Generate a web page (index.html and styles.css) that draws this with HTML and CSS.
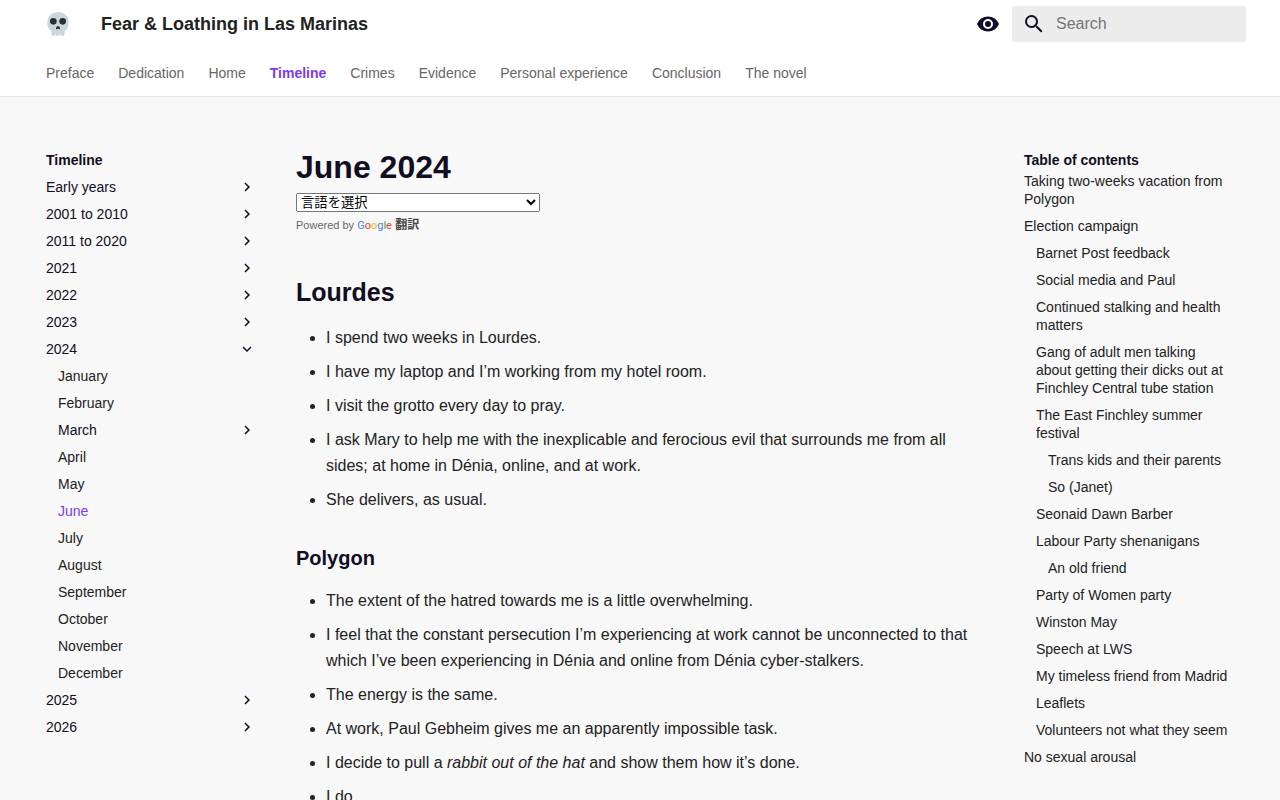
FILE: index.html
```html
<!DOCTYPE html>
<html lang="en">
<head>
  <meta charset="UTF-8" />
  <meta name="viewport" content="width=device-width, initial-scale=1" />
  <title>June 2024 - Fear &amp; Loathing in Las Marinas</title>
  <link rel="stylesheet" href="styles.css">
</head>
<body>

<!-- shared icons -->
<svg class="sprite" aria-hidden="true">
  <symbol id="chevron" viewBox="0 0 24 24"><path d="M8.59 16.58 13.17 12 8.59 7.41 10 6l6 6-6 6z"/></symbol>
</svg>

<header class="header">
  <div class="header-bar">
    <a href="#" class="logo" aria-label="Home">
      <svg viewBox="0 0 36 36">
        <path fill="#CCD6DD" d="M34 16C34 6 26.837 0 18 0S2 6 2 16c0 5.574 2.002 10.388 6 12.64V33a3 3 0 0 0 6 0v1a2.5 2.5 0 0 0 4 1 2.5 2.5 0 0 0 4-1v-1a3 3 0 0 0 6 0v-4.360C31.998 26.388 34 21.574 34 16z"/>
        <circle fill="#292F33" cx="11" cy="14" r="5"/>
        <circle fill="#292F33" cx="25" cy="14" r="5"/>
        <path fill="#292F33" d="M15 25c0-2 1.500-4 3-4s3 2 3 4-2 0-3 0-3 2-3 0z"/>
        <path fill="#fff" fill-opacity=".4" d="M13.500 32h1v4h-1zM17.500 32h1v4h-1zM21.500 32h1v4h-1z"/>
      </svg>
    </a>
    <span class="site-title">Fear &amp; Loathing in Las Marinas</span>
    <button type="button" class="icon-button" aria-label="Switch colour mode">
      <svg viewBox="0 0 24 24"><path d="M12 9a3 3 0 0 0-3 3 3 3 0 0 0 3 3 3 3 0 0 0 3-3 3 3 0 0 0-3-3m0 8a5 5 0 0 1-5-5 5 5 0 0 1 5-5 5 5 0 0 1 5 5 5 5 0 0 1-5 5m0-12.500C7 4.500 2.730 7.610 1 12c1.730 4.390 6 7.500 11 7.500s9.270-3.110 11-7.500c-1.730-4.390-6-7.500-11-7.500"/></svg>
    </button>
    <form class="search" role="search">
      <svg viewBox="0 0 24 24"><path d="M9.500 3A6.500 6.500 0 0 1 16 9.500c0 1.610-.59 3.090-1.560 4.230l.27.27h.79l5 5-1.500 1.500-5-5v-.79l-.27-.27A6.516 6.516 0 0 1 9.500 16 6.500 6.500 0 0 1 3 9.500 6.500 6.500 0 0 1 9.500 3m0 2C7 5 5 7 5 9.500S7 14 9.500 14 14 12 14 9.500 12 5 9.500 5"/></svg>
      <input type="text" placeholder="Search" aria-label="Search">
    </form>
  </div>
  <nav class="tabs" aria-label="Tabs">
    <a href="#">Preface</a>
    <a href="#">Dedication</a>
    <a href="#">Home</a>
    <a href="#" class="active">Timeline</a>
    <a href="#">Crimes</a>
    <a href="#">Evidence</a>
    <a href="#">Personal experience</a>
    <a href="#">Conclusion</a>
    <a href="#">The novel</a>
  </nav>
</header>

<div class="layout">
  <nav class="sidebar" aria-label="Timeline">
    <div class="nav-title">Timeline</div>
    <ul>
      <li><a href="#" class="section">Early years <svg><use href="#chevron"/></svg></a></li>
      <li><a href="#" class="section">2001 to 2010 <svg><use href="#chevron"/></svg></a></li>
      <li><a href="#" class="section">2011 to 2020 <svg><use href="#chevron"/></svg></a></li>
      <li><a href="#" class="section">2021 <svg><use href="#chevron"/></svg></a></li>
      <li><a href="#" class="section">2022 <svg><use href="#chevron"/></svg></a></li>
      <li><a href="#" class="section">2023 <svg><use href="#chevron"/></svg></a></li>
      <li>
        <a href="#" class="section open">2024 <svg><use href="#chevron"/></svg></a>
        <ul>
          <li><a href="#">January</a></li>
          <li><a href="#">February</a></li>
          <li><a href="#" class="section">March <svg><use href="#chevron"/></svg></a></li>
          <li><a href="#">April</a></li>
          <li><a href="#">May</a></li>
          <li><a href="#" class="active">June</a></li>
          <li><a href="#">July</a></li>
          <li><a href="#">August</a></li>
          <li><a href="#">September</a></li>
          <li><a href="#">October</a></li>
          <li><a href="#">November</a></li>
          <li><a href="#">December</a></li>
        </ul>
      </li>
      <li><a href="#" class="section">2025 <svg><use href="#chevron"/></svg></a></li>
      <li><a href="#" class="section">2026 <svg><use href="#chevron"/></svg></a></li>
    </ul>
  </nav>

  <main class="content">
    <h1>June 2024</h1>
    <div class="translate">
      <select aria-label="言語翻訳ウィジェット" lang="ja">
        <option>言語を選択</option>
      </select>
      <div class="powered">
        Powered by
        <a href="#"><span class="google"><span class="blue">G</span><span class="red">o</span><span class="yellow">o</span><span class="blue">g</span><span class="green">l</span><span class="red">e</span></span> <span lang="ja">翻訳</span></a>
      </div>
    </div>

    <h2 id="lourdes">Lourdes</h2>
    <ul>
      <li>I spend two weeks in Lourdes.</li>
      <li>I have my laptop and I’m working from my hotel room.</li>
      <li>I visit the grotto every day to pray.</li>
      <li>I ask Mary to help me with the inexplicable and ferocious evil that surrounds me from all sides; at home in Dénia, online, and at work.</li>
      <li>She delivers, as usual.</li>
    </ul>

    <h3 id="polygon">Polygon</h3>
    <ul>
      <li>The extent of the hatred towards me is a little overwhelming.</li>
      <li>I feel that the constant persecution I’m experiencing at work cannot be unconnected to that which I’ve been experiencing in Dénia and online from Dénia cyber-stalkers.</li>
      <li>The energy is the same.</li>
      <li>At work, Paul Gebheim gives me an apparently impossible task.</li>
      <li>I decide to pull a <em>rabbit out of the hat</em> and show them how it’s done.</li>
      <li>I do.</li>
    </ul>
  </main>

  <nav class="sidebar toc" aria-label="Table of contents">
    <div class="nav-title">Table of contents</div>
    <ul>
      <li><a href="#">Taking two-weeks vacation from Polygon</a></li>
      <li>
        <a href="#">Election campaign</a>
        <ul>
          <li><a href="#">Barnet Post feedback</a></li>
          <li><a href="#">Social media and Paul</a></li>
          <li><a href="#">Continued stalking and health matters</a></li>
          <li><a href="#">Gang of adult men talking about getting their dicks out at Finchley Central tube station</a></li>
          <li>
            <a href="#">The East Finchley summer festival</a>
            <ul>
              <li><a href="#">Trans kids and their parents</a></li>
              <li><a href="#">So (Janet)</a></li>
            </ul>
          </li>
          <li><a href="#">Seonaid Dawn Barber</a></li>
          <li>
            <a href="#">Labour Party shenanigans</a>
            <ul>
              <li><a href="#">An old friend</a></li>
            </ul>
          </li>
          <li><a href="#">Party of Women party</a></li>
          <li><a href="#">Winston May</a></li>
          <li><a href="#">Speech at LWS</a></li>
          <li><a href="#">My timeless friend from Madrid</a></li>
          <li><a href="#">Leaflets</a></li>
          <li><a href="#">Volunteers not what they seem</a></li>
        </ul>
      </li>
      <li><a href="#">No sexual arousal</a></li>
    </ul>
  </nav>
</div>

</body>
</html>
```
FILE: styles.css
```css
* { box-sizing: border-box; }
body {
  margin: 0; background: #f8f8f8; color: #222;
  font-family: "Liberation Sans", Arial, "Noto Sans CJK JP", sans-serif;
  font-size: 16px; line-height: 26px;
}
a { color: inherit; text-decoration: none; }
a:hover { color: #7c3aed; }
.sprite { display: none; }

/* header */
.header { position: sticky; top: 0; z-index: 2; background: white; border-bottom: 1px solid #e8e8e8; }
.header-bar { display: flex; align-items: center; height: 48px; padding: 0 34px 0 46px; }
.header svg { display: block; width: 24px; height: 24px; fill: #110d23; }
.site-title { margin-left: 31px; flex: 1; font-size: 18px; font-weight: 700; }
.icon-button { padding: 0; margin-right: 12px; border: none; background: none; cursor: pointer; }
.search {
  display: flex; align-items: center; width: 234px; height: 36px; padding: 0 10px;
  background: #ececec; border-radius: 2px;
}
.search input {
  flex: 1; min-width: 0; margin-left: 10px; padding: 0; border: none; outline: none; background: none;
  font: inherit; color: #222;
}
.search input::placeholder { color: #757575; }

.tabs { display: flex; gap: 24px; height: 48px; padding: 16px 46px 0; font-size: 14px; line-height: 18px; color: #666; white-space: nowrap; }
.tabs .active { color: #7c3aed; font-weight: 700; }

/* page */
.layout { display: grid; grid-template-columns: 210px minmax(0, 1fr) 210px; gap: 40px; padding: 54px 46px 0; }

.sidebar { font-size: 14px; line-height: 18px; }
.sidebar ul { list-style: none; margin: 0; padding: 0; }
.sidebar ul ul { padding-left: 12px; }
.sidebar a { display: flex; justify-content: space-between; margin-top: 9px; }
.sidebar svg { width: 18px; height: 18px; fill: #110d23; }
.sidebar .section { color: #110d23; }
.sidebar .open svg { transform: rotate(90deg); }
.sidebar .active { color: #7c3aed; }
.nav-title { font-weight: 700; color: #110d23; }
.toc > ul > li:first-child > a { margin-top: 3px; }

/* article */
h1, h2, h3 { color: #110d23; font-weight: 700; }
h1 { margin: 0; font-size: 32px; line-height: 32px; }
h2 { margin: 36px 0 16px; font-size: 25px; line-height: 34px; }
h3 { margin: 30px 0 15px; font-size: 20px; line-height: 30px; }

.translate { margin-top: 10px; font-size: 11px; line-height: 26px; color: #666; }
.translate select {
  display: block; width: 244px; height: 19px; color: black;
  font-family: "Liberation Sans", "Noto Sans CJK JP", sans-serif;
}
.powered a { color: #444; font-size: 12px; font-weight: 700; }
.google { font-family: Roboto, sans-serif; font-size: 11px; font-weight: 400; }
.blue { color: #4285f4; }
.red { color: #ea4335; }
.yellow { color: #fbbc05; }
.green { color: #34a853; }

.content ul { margin: 0; padding-left: 30px; }
.content li { margin-bottom: 8px; }
```
